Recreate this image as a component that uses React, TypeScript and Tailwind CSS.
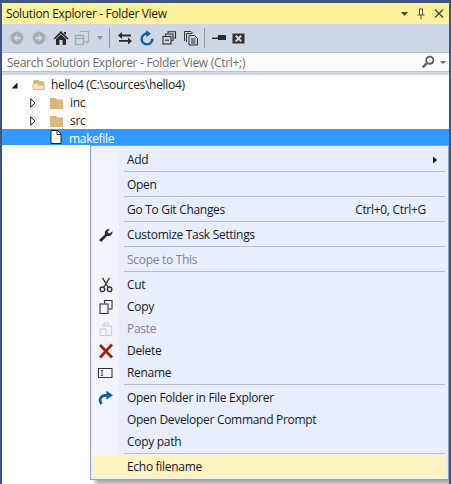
import React from "react";

const font = { fontFamily: '"Open Sans", "Noto Sans", sans-serif' };

function Svg({ w = 16, h = 16, children }: { w?: number; h?: number; children: React.ReactNode }) {
  return (
    <svg width={w} height={h} viewBox={`0 0 ${w} ${h}`} className="block shrink-0">
      {children}
    </svg>
  );
}

const Back = ({ flip = false }: { flip?: boolean }) => (
  <Svg>
    <g transform={flip ? "matrix(-1 0 0 1 16 0)" : undefined}>
      <circle cx="8" cy="8" r="6.5" fill="#a6abb5" />
      <path d="M4.5 8 L8 4.5 V6.8 H11.5 V9.2 H8 V11.5 Z" fill="#d3d8e4" />
    </g>
  </Svg>
);

const Home = () => (
  <Svg>
    <path d="M8 1 L15.5 8.5 L14.3 9.6 L8 3.4 L1.7 9.6 L.5 8.5 Z" fill="#2a2a2a" />
    <path d="M3 9 L8 4.4 L13 9 V15 H9.6 V10 H6.4 V15 H3 Z" fill="#2a2a2a" />
    <path d="M11 2 H13 V5 L11 3.5 Z" fill="#2a2a2a" />
  </Svg>
);

const Sync = () => (
  <Svg>
    <g fill="none" stroke="#a4a9b3" strokeWidth="1.2">
      <rect x="1.5" y="5.5" width="8" height="9" />
      <path d="M1.5 8.5 H9.5" />
      <path d="M6 1.5 H14.5 V11.5 H12" />
    </g>
    <path d="M10 11 L13 14 L15.5 11 Z" fill="#b0b5c0" />
  </Svg>
);

const Swap = () => (
  <Svg>
    <path d="M1 5.5 L5 2 V4.6 H14 V6.4 H5 V9 Z" fill="#2a2a2a" />
    <path d="M15 11 L11 7.6 V10 H2 V11.8 H11 V14.5 Z" fill="#2a2a2a" />
  </Svg>
);

const Refresh = () => (
  <Svg>
    <path d="M8.6 3.6 A5.4 5.4 0 1 0 13.4 8.8" fill="none" stroke="#12609f" strokeWidth="2.4" />
    <path d="M7.2 .3 L12 3.8 L7.2 7 Z" fill="#12609f" />
  </Svg>
);

const Collapse = () => (
  <Svg>
    <g fill="none" stroke="#2e2e2e" strokeWidth="1.1">
      <rect x="2" y="6.5" width="8" height="7.5" fill="#cfd6e5" />
      <path d="M4.5 6 V4 H12 V10.5 H10.5" />
      <path d="M7 3.5 V1.7 H14.5 V8 H12.5" />
      <path d="M4 10.2 H8" />
    </g>
  </Svg>
);

const Docs = () => (
  <Svg>
    <g fill="none" stroke="#333" strokeWidth="1">
      <path d="M1.5 11 V1.5 H8 L10 3.5" />
      <path d="M3.5 12 V3.5 H9" />
      <path d="M6 15 V5.5 H11.5 L14.5 8.5 V15 Z" fill="#cfd6e5" />
      <path d="M8 9 H12.5 M8 11 H12.5 M8 13 H12.5" />
    </g>
  </Svg>
);

const PinLine = () => (
  <Svg>
    <path d="M1 9 H7 V7.6 H1 Z" fill="#2a2a2a" />
    <rect x="7" y="5" width="8" height="5" fill="#2a2a2a" />
  </Svg>
);

const XBox = () => (
  <Svg w={13} h={11}>
    <rect x=".5" y=".5" width="12" height="10" fill="#333" />
    <path d="M3.8 2.6 L9.2 8.4 M9.2 2.6 L3.8 8.4" stroke="#ddd" strokeWidth="2" />
  </Svg>
);

const Folder = () => (
  <Svg w={14} h={12}>
    <path d="M0 1 H6 L7.5 2.5 H13 V12 H0 Z" fill="#dcb67a" />
  </Svg>
);

const FolderOpen = () => (
  <Svg w={14} h={12}>
    <path d="M1 11 V2.5 L2.5 1 H6.5 L7.5 2.3 H12.5 V11 Z" fill="#dcb67a" />
    <path d="M.5 6 L2 4.5 H6 V6 H12 V10.5 H1.5 Z" fill="#f3e2c4" stroke="#dcb67a" strokeWidth=".8" />
  </Svg>
);

const FileIcon = () => (
  <Svg w={12} h={14}>
    <path d="M1 .5 H7.5 L11 4 V13.5 H1 Z" fill="#fff" stroke="#222" />
    <path d="M7 .5 V4.5 H11" fill="none" stroke="#222" />
  </Svg>
);

const Wrench = () => (
  <Svg>
    <path d="M1 13 L7 7.2 C6.2 4 8.4 1.8 11.8 2 L9.6 4.4 L10.2 6 L12 6.4 L14.4 4.2 C14.8 7.6 12.4 9.6 9 9 L3.2 15 Z" fill="#2c2c2c" />
  </Svg>
);

const Scissors = () => (
  <Svg>
    <path d="M4.5 .8 L10 10 M11.5 .8 L6 10" stroke="#333" strokeWidth="1.3" fill="none" />
    <circle cx="4.4" cy="12.3" r="2.3" fill="none" stroke="#333" strokeWidth="1.3" />
    <circle cx="11.6" cy="12.3" r="2.3" fill="none" stroke="#333" strokeWidth="1.3" />
  </Svg>
);

const Copy = () => (
  <Svg>
    <g fill="none" stroke="#333" strokeWidth="1.1">
      <path d="M6.5 4.5 V1.5 H14 V10 H10.5" />
      <rect x="2" y="5" width="8" height="9.5" />
    </g>
  </Svg>
);

const Paste = () => (
  <Svg>
    <g fill="none" stroke="#c8ccd4" strokeWidth="1.1">
      <path d="M6 5 V2 H10 V5" />
      <path d="M4 5 H13.5 V14.5 H8" />
      <rect x="2" y="8" width="6" height="6.5" />
    </g>
  </Svg>
);

const Del = () => (
  <Svg>
    <path d="M2 2 L14 14.5 M14 1.5 L2 14.5" stroke="#a1260d" strokeWidth="2.8" fill="none" />
  </Svg>
);

const Rename = () => (
  <Svg w={15} h={11}>
    <rect x=".5" y=".5" width="13.5" height="9" fill="none" stroke="#333" />
    <path d="M3 2.5 H5 M3 7.5 H5 M4 2.5 V7.5" stroke="#333" strokeWidth=".8" fill="none" />
  </Svg>
);

const Redo = () => (
  <Svg>
    <path d="M3.4 14 C.2 8.6 3.4 5.2 9 5.2" fill="none" stroke="#10609f" strokeWidth="2.8" />
    <path d="M8.4 .8 L15 5.2 L8.4 9.6 Z" fill="#10609f" />
  </Svg>
);

type Item = { kind: "item"; label: string; icon?: React.ReactNode; shortcut?: string; sub?: boolean; disabled?: boolean; hot?: boolean };
type Entry = { kind: "sep" } | Item;

const I = (label: string, extra: Partial<Item> = {}): Entry => ({ kind: "item", label, ...extra });
const S: Entry = { kind: "sep" };

const entries: Entry[] = [
  I("Add", { sub: true }),
  S,
  I("Open"),
  S,
  I("Go To Git Changes", { shortcut: "Ctrl+0, Ctrl+G" }),
  S,
  I("Customize Task Settings", { icon: <Wrench /> }),
  S,
  I("Scope to This", { disabled: true }),
  S,
  I("Cut", { icon: <Scissors /> }),
  I("Copy", { icon: <Copy /> }),
  I("Paste", { icon: <Paste />, disabled: true }),
  I("Delete", { icon: <Del /> }),
  I("Rename", { icon: <Rename /> }),
  S,
  I("Open Folder in File Explorer", { icon: <Redo /> }),
  I("Open Developer Command Prompt"),
  I("Copy path"),
  S,
  I("Echo filename", { hot: true }),
];

function Row({ e }: { e: Entry }) {
  if (e.kind === "sep") {
    return (
      <div className="flex h-[3px]">
        <div className="w-[27px] shrink-0 bg-[#f1f4fd]" />
        <div className="flex-1 pl-[5px] pr-[2px]">
          <div className="h-px bg-[#b9bdcc]" />
        </div>
      </div>
    );
  }
  if (e.hot) {
    return (
      <div className="-mt-px ml-[2px] mr-[2px] flex h-[22px] items-center bg-[#fff3bf] pl-[33px] pt-px text-[12px] tracking-[-0.3px] text-[#161a2c]">
        <span>{e.label}</span>
      </div>
    );
  }
  return (
    <div className="flex h-[22px] items-center">
      <div className="flex h-full w-[27px] shrink-0 items-center justify-center bg-[#f1f4fd]">{e.icon}</div>
      <div className={`flex flex-1 items-center justify-between pb-px pl-[8px] pr-[3px] text-[12px] tracking-[-0.3px] ${e.disabled ? "text-[#7f8591]" : "text-[#161a2c]"}`}>
        <span>{e.label}</span>
        {e.shortcut && <span className="mr-[18px]">{e.shortcut}</span>}
        {e.sub && (
          <svg width="6" height="8" viewBox="0 0 6 8" className="mr-[6px] block">
            <path d="M1 .5 L5 4 L1 7.5 Z" fill="#111" />
          </svg>
        )}
      </div>
    </div>
  );
}

const Expander = ({ open }: { open?: boolean }) =>
  open ? (
    <svg width="7" height="7" viewBox="0 0 7 7" className="block">
      <path d="M6.5 .5 V6.5 H.5 Z" fill="#1e1e1e" />
    </svg>
  ) : (
    <svg width="6" height="10" viewBox="0 0 6 10" className="block">
      <path d="M.7 .8 L5 5 L.7 9.2 Z" fill="#fff" stroke="#1e1e1e" />
    </svg>
  );

export default function App() {
  return (
    <div style={font} className="relative flex h-[484px] w-[451px] flex-col overflow-hidden border-x-2 border-t-[3px] border-[#3f5580] bg-white text-[12px] tracking-[-0.3px] text-[#1c1c1c]">
      <div className="flex h-[21px] shrink-0 items-center justify-between bg-[#fff29d] pl-[4px] pr-[5px]">
        <span className="tracking-[-0.34px]">Solution Explorer - Folder View</span>
        <div className="flex items-center gap-[9px]">
          <svg width="7" height="4" viewBox="0 0 7 4" className="block"><path d="M0 0 H7 L3.5 4 Z" fill="#4a4a3c" /></svg>
          <svg width="8" height="12" viewBox="0 0 8 12" className="block"><path d="M2 .5 H6 V6.5 H7.5 V7.5 H4.5 V11.5 H3.5 V7.5 H.5 V6.5 H2 Z M3 1.5 V6.5 H5 V1.5 Z" fill="#55553f" fillRule="evenodd" /></svg>
          <svg width="10" height="9" viewBox="0 0 10 9" className="block"><path d="M1 .5 L9 8.5 M9 .5 L1 8.5" stroke="#55553f" strokeWidth="1.5" /></svg>
        </div>
      </div>

      <div className="flex h-[28px] shrink-0 items-center bg-[#cfd6e5] pl-[7px]">
        <Back />
        <div className="ml-[6px]"><Back flip /></div>
        <div className="ml-[6px]"><Home /></div>
        <div className="ml-[5px]"><Sync /></div>
        <svg width="6" height="4" viewBox="0 0 6 4" className="ml-[7px] block"><path d="M0 0 H6 L3 4 Z" fill="#8f939c" /></svg>
        <div className="ml-[6px] h-[20px] w-px bg-[#8f97a8]" />
        <div className="ml-[7px]"><Swap /></div>
        <div className="ml-[6px]"><Refresh /></div>
        <div className="ml-[6px]"><Collapse /></div>
        <div className="ml-[6px]"><Docs /></div>
        <div className="ml-[5px] h-[20px] w-px bg-[#8f97a8]" />
        <div className="ml-[6px]"><PinLine /></div>
        <div className="ml-[5px]"><XBox /></div>
      </div>

      <div className="h-[20px] shrink-0 border-y border-[#b9c1d4] bg-[#fcfcfc]">
        <div className="flex h-full items-center justify-between pl-[5px] pr-[3px]">
          <span className="pt-px text-[#6d6d6d]">Search Solution Explorer - Folder View (Ctrl+;)</span>
          <div className="flex items-center gap-[5px]">
            <svg width="14" height="14" viewBox="0 0 14 14" className="block">
              <circle cx="8.8" cy="5.2" r="3.6" fill="none" stroke="#5f5f5f" strokeWidth="1.8" />
              <path d="M6 8 L1.8 12.4" stroke="#5f5f5f" strokeWidth="2.4" />
            </svg>
            <svg width="6" height="3" viewBox="0 0 6 3" className="block"><path d="M0 0 H6 L3 3 Z" fill="#666" /></svg>
          </div>
        </div>
      </div>

      <div className="h-[3px] shrink-0 bg-[#cfd6e5]" />

      <div className="pt-px">
        <div className="flex h-[18px] items-center pl-[9px]">
          <Expander open />
          <div className="ml-[14px]"><FolderOpen /></div>
          <span className="ml-[5px] pb-px">hello4 (C:\sources\hello4)</span>
        </div>
        <div className="flex h-[18px] items-center pl-[28px]">
          <Expander />
          <div className="ml-[14px]"><Folder /></div>
          <span className="ml-[6px] pb-px">inc</span>
        </div>
        <div className="flex h-[17px] items-center pl-[28px]">
          <Expander />
          <div className="ml-[14px]"><Folder /></div>
          <span className="ml-[6px]">src</span>
        </div>
        <div className="flex h-[16px] items-center bg-[#3399ff] pl-[48px] text-white">
          <FileIcon />
          <span className="ml-[7px] pt-[3px]">makefile</span>
        </div>
      </div>

      <div className="absolute left-[88px] top-[142px] h-[335px] w-[359px] border border-[#99a2b5] bg-[#e9eefe] pb-[2px] pl-px pr-px pt-[3px] shadow-[5px_4px_4px_rgba(0,0,0,0.35)]">
        {entries.map((e, i) => (
          <Row key={i} e={e} />
        ))}
      </div>
    </div>
  );
}
